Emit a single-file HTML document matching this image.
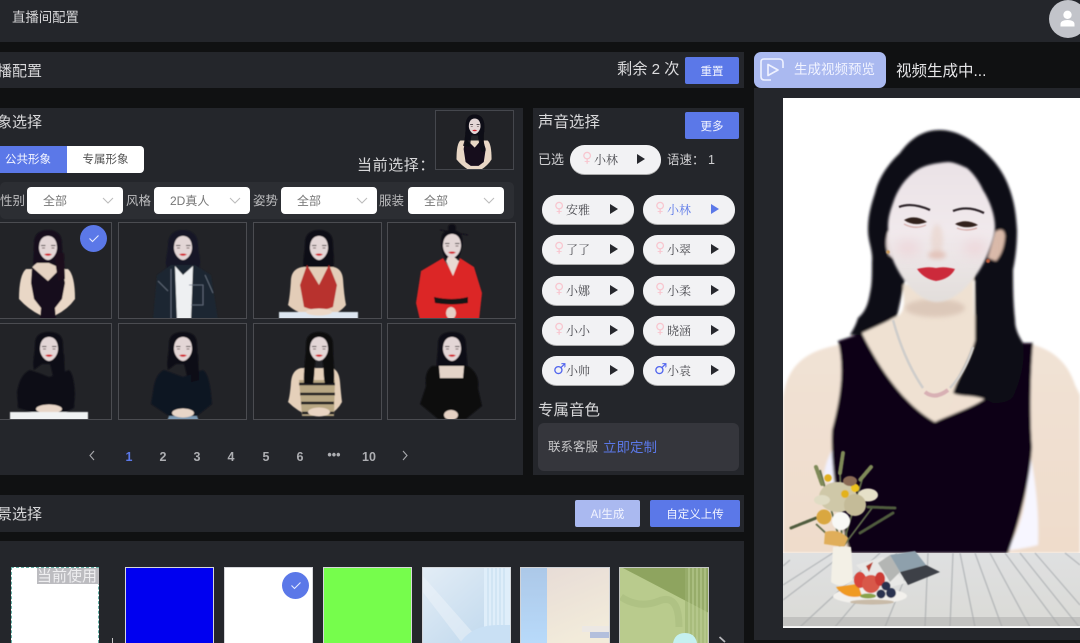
<!DOCTYPE html>
<html lang="zh"><head><meta charset="utf-8"><title>直播间配置</title>
<style>
html,body{margin:0;padding:0;background:#101112;width:1080px;height:643px;overflow:hidden}
#p{position:relative;width:1080px;height:643px;overflow:hidden;background:#101112;font-family:"Liberation Sans","Noto Sans CJK SC",sans-serif;color:#d8d8da;filter:blur(.3px)}
#p div,#p span.a,#p svg.a{position:absolute}
.bar{background:#24262b}
.t{white-space:nowrap;line-height:1}
.btn{background:#5b78e8;color:#f2f4ff;border-radius:2px;font-size:11.5px;display:flex;align-items:center;justify-content:center;height:27px;width:54px;top:0}
.sel{background:#fff;border-radius:4px;width:96px;height:27px;top:187px;color:#777;font-size:12px;line-height:29px;text-indent:16px}
.sel svg{position:absolute;right:9px;top:10px}
.lb{top:195px;font-size:12.5px;color:#bcbcbe;line-height:1;white-space:nowrap}
.cell{width:127px;height:95px;border:1px solid #4b4c51;background:#222327;overflow:hidden}
.cell svg{position:absolute;left:0;top:0}
.pill{width:92px;height:29px;border-radius:15px;background:#f2f2f4;box-shadow:0 1px 0 #aaa}
.pill .g{position:absolute;left:12px;top:5px;font:14px/17px "DejaVu Sans",sans-serif;color:#f8c6cf}
.pill .g.m{color:#5266ee;font-size:15px;left:11px}
.pill .n{position:absolute;left:24px;top:8px;font:12px/14px "Liberation Serif","Noto Serif CJK SC",serif;color:#4b4b50;white-space:nowrap}
.pill i{position:absolute;left:68px;top:9px;width:0;height:0;border-left:8px solid #27282d;border-top:5.5px solid transparent;border-bottom:5.5px solid transparent}
.pg{top:451px;font-size:12.5px;font-weight:bold;color:#adaeb2;line-height:13px;width:24px;text-align:center}
.th{top:567px;width:89px;height:76px;box-sizing:border-box;border:1px solid #d6d6da;border-bottom:0}
</style></head><body>
<div id="p">
<svg width="0" height="0" style="position:absolute"><defs>
<filter id="b" x="-20%" y="-20%" width="140%" height="140%"><feGaussianBlur stdDeviation=".4"/></filter>
<filter id="b2" x="-10%" y="-10%" width="120%" height="120%"><feGaussianBlur stdDeviation="1.200"/></filter>
<filter id="b6" x="-100%" y="-100%" width="300%" height="300%"><feGaussianBlur stdDeviation="6"/></filter>
<filter id="b3" x="-60%" y="-100%" width="220%" height="300%"><feGaussianBlur stdDeviation="2.500"/></filter>
<symbol id="face" viewBox="0 0 129 97" width="129" height="97">
<path d="M64 13C58 13 55 18 55 25C55 31 60 37 64 37C68 37 73 31 73 25C73 18 70 13 64 13Z" fill="#e3d6d6"/>
<path d="M57 22.500h4.500M67 22.500h4.500" stroke="#2a2228" stroke-width="1"/>
<path d="M61 31.500q3 1.800 6 0q-3-1.200-6 0z" fill="#d3202a" stroke="#d3202a" stroke-width=".8"/>
<path d="M58 25h3M67.500 25h3" stroke="#4a3a3a" stroke-width=".8"/>
</symbol>
<symbol id="hl" viewBox="0 0 129 97" width="129" height="97">
<path d="M64 7c-9 0-14 6-14 18 0 12-1 22-4 30l10 2c2-6 2-14 3-18l10 0c1 6 2 18 6 26l6-2c-1-4-3-10-3-20 0-8 1-10 1-18 0-12-6-18-15-18z" fill="#0e0c14"/>
</symbol>
</defs></svg>

<!-- top bar -->
<div class="bar" style="left:0;top:0;width:1080px;height:42px"></div>
<div class="t" style="left:12px;top:11px;font-size:13.4px;color:#d6d6d8">直播间配置</div>
<div style="left:1049px;top:0;width:38px;height:38px;border-radius:50%;background:#c2c4ca"></div>
<svg class="a" style="left:1058px;top:9px" width="20" height="20" viewBox="0 0 20 20"><circle cx="9.500" cy="5.800" r="4.200" fill="#fff"/><path d="M2.500 17.500v-2.500c0-2.600 3-4 7-4s7 1.400 7 4v2.500z" fill="#fff"/></svg>

<!-- header bar -->
<div class="bar" style="left:0;top:52px;width:744px;height:36px"></div>
<div class="t" style="left:-18px;top:64px;font-size:15px">直播配置</div>
<div class="t" style="left:617px;top:62px;font-size:15.200px;color:#dcdcde">剩余 2 次</div>
<div class="btn" style="left:685px;top:57px;">重置</div>

<!-- generate -->
<div style="left:754px;top:52px;width:132px;height:36px;border-radius:7px;background:#aab9f0"></div>
<svg class="a" style="left:759px;top:56px" width="26" height="27" viewBox="0 0 26 27"><path d="M12 24H5.500Q2 24 2 20.500V6Q2 3 5 3H20Q24 3 24 6.500V12" fill="none" stroke="#eef1ff" stroke-width="1.600"/><path d="M9 8.500L19 14L9 19.500Z" fill="none" stroke="#eef1ff" stroke-width="1.700" stroke-linejoin="round"/></svg>
<div class="t" style="left:794px;top:63px;font-size:13.500px;color:#f1f3ff">生成视频预览</div>
<div class="t" style="left:896px;top:64px;font-size:15.500px;color:#e6e6e8">视频生成中...</div>

<!-- avatar panel -->
<div class="bar" style="left:0;top:108px;width:523px;height:367px"></div>
<div class="t" style="left:-18px;top:115px;font-size:15px">形象选择</div>
<div class="t" style="left:357px;top:158px;font-size:15px;letter-spacing:.6px">当前选择：</div>
<div style="left:435px;top:110px;width:77px;height:58px;border:1px solid #45474d;background:#222327;overflow:hidden">
<svg class="a" style="left:-3px;top:-1px" width="84" height="63" viewBox="0 0 129 97"><g filter="url(#b)"><use href="#hl"/><path d="M42 47Q36 52 36 76Q44 86 56 93L72 93Q84 86 90 76Q90 52 84 47Z" fill="#e9d7c6"/><path d="M50 44L64 58L76 44L81 60L78 80L70 86L58 86L50 80L47 60Z" fill="#15091f"/><use href="#hl" opacity=".9"/><use href="#face"/></g></svg>
</div>
<div style="left:0;top:146px;width:67px;height:27px;background:#5b78e8;color:#f3f5ff;font-size:11.500px;line-height:28px;text-indent:5px">公共形象</div>
<div style="left:67px;top:146px;width:77px;height:27px;background:#fff;color:#555;font-size:11.500px;line-height:28px;text-align:center;border-radius:0 4px 4px 0">专属形象</div>

<div style="left:0;top:182px;width:514px;height:37px;background:#2c2e33;border-radius:5px"></div>
<div class="lb" style="left:0">性别</div><div class="sel" style="left:27px">全部<svg width="12" height="7" viewBox="0 0 12 7"><path d="M1 1l5 5 5-5" fill="none" stroke="#bbb"/></svg></div>
<div class="lb" style="left:126px">风格</div><div class="sel" style="left:154px">2D真人<svg width="12" height="7" viewBox="0 0 12 7"><path d="M1 1l5 5 5-5" fill="none" stroke="#bbb"/></svg></div>
<div class="lb" style="left:253px">姿势</div><div class="sel" style="left:281px">全部<svg width="12" height="7" viewBox="0 0 12 7"><path d="M1 1l5 5 5-5" fill="none" stroke="#bbb"/></svg></div>
<div class="lb" style="left:379px">服装</div><div class="sel" style="left:408px">全部<svg width="12" height="7" viewBox="0 0 12 7"><path d="M1 1l5 5 5-5" fill="none" stroke="#bbb"/></svg></div>

<!-- cells row 1 -->
<div class="cell" style="left:-17px;top:222px"><svg width="129" height="97"><g filter="url(#b)">
<path d="M50 20c0-9 6-13 14-13s14 4 14 13c0 12 3 26 1 36l-28-4c-3-6-1-22-1-32z" fill="#120d1c"/>
<path d="M42 46Q35 52 35 76Q44 86 56 92L72 92Q84 86 91 76Q91 52 84 46Z" fill="#e9d7c6"/>
<path d="M53 40L65 40L74 44V50L64 58L48 44Z" fill="#e5d2c2"/>
<path d="M48 44L64 58L78 44L81 60L78 76L71 85L72 97L56 97L57 85L50 76L47 60Z" fill="#17081f"/>
<path d="M70 30L80 30L81 56L74 58Z" fill="#1a0d1f"/><use href="#face"/></g></svg></div>
<div class="cell" style="left:118px;top:222px"><svg width="129" height="97"><g filter="url(#b)">
<path d="M49 22c0-10 6-15 15-15s15 5 15 15c0 8 4 14 1 24H48c-3-8 1-16 1-24z" fill="#141925"/>
<path d="M52 42L76 42L92 52L99 97H34L38 52Z" fill="#1d2530"/>
<path d="M56 43L64 52L74 43L72 97H58Z" fill="#eef0f2"/>
<path d="M70 62h14v20H72M52 46v50M39 58l10 10M86 52l8 18" fill="none" stroke="#6b7686" stroke-width=".8"/>
<use href="#face"/></g></svg></div>
<div class="cell" style="left:253px;top:222px"><svg width="129" height="97"><g filter="url(#b)">
<path d="M51 20c0-9 6-13 14-13s14 4 14 13c0 9 2 17 0 26l-7 4H57l-7-4c-2-8 1-17 1-26z" fill="#0e0c14"/>
<path d="M48 44Q38 46 37 56Q36 74 34 82Q42 90 58 93L74 93Q86 90 92 82Q90 72 89 56Q88 46 80 44Z" fill="#e3cdb8"/>
<path d="M53 42L65 62L75 42L83 62L79 84Q65 90 50 84L46 62Z" fill="#b8302f"/>
<use href="#face" x="1"/><rect x="25" y="89" width="79" height="8" fill="#dde6f0"/>
<ellipse cx="65" cy="89" rx="13" ry="3.500" fill="#ecd9c8"/></g></svg></div>
<div class="cell" style="left:387px;top:222px"><svg width="129" height="97"><g filter="url(#b)">
<circle cx="64" cy="5" r="4" fill="#0e0c14"/><path d="M52 7L80 12" stroke="#0e0c14" stroke-width=".8"/>
<path d="M54 12c2-4 6-5 10-5s9 2 10 7c1 8-1 16-4 22H58c-4-6-6-16-4-24z" fill="#0e0c14"/>
<path d="M55 35L65 50L72 35L86 44L94 70L91 97H32L28 80L33 48Z" fill="#dc2527"/>
<path d="M58 38L65 53L71 38L66 34H60Z" fill="#e9d9d2"/>
<path d="M46 74Q64 78 80 74V80Q64 83 47 80Z" fill="#141318"/>
<ellipse cx="63" cy="90" rx="5" ry="6" fill="#e5cfc4"/><use href="#face" y="-2"/></g></svg></div>
<!-- cells row 2 -->
<div class="cell" style="left:-17px;top:323px"><svg width="129" height="97"><g filter="url(#b)">
<path d="M51 20c0-9 6-12 14-12s14 3 14 12c0 11 3 28 1 38l-9 2c-2-6-3-14-5-20h-8l-8 6c-2-8 1-17 1-26z" fill="#0e0c14"/>
<path d="M46 46L55 49L65 53L75 50L85 46Q90 50 91 70L90 84L82 88L48 88L34 84L33 68Q36 50 46 46Z" fill="#0f1119"/>
<ellipse cx="65" cy="85" rx="13" ry="4.500" fill="#e8d6c8"/><rect x="26" y="88" width="78" height="9" fill="#f0f2f3"/>
<path d="M73 30L80 30L81 56L73 58Z" fill="#0e0c14"/><use href="#face" x="1"/></g></svg></div>
<div class="cell" style="left:118px;top:323px"><svg width="129" height="97"><g filter="url(#b)">
<path d="M50 20c0-9 6-12 14-12s14 3 14 12c0 11 3 28 1 38l-9 2c-2-6-3-14-5-20h-8l-8 6c-2-8 1-17 1-26z" fill="#0e0c14"/>
<path d="M45 46L64 53L84 46Q90 50 92 70L93 80L78 92L50 92L32 80L34 68Q36 50 45 46Z" fill="#0e1220"/>
<path d="M50 92L78 92L80 97H48Z" fill="#7d9ab4"/><ellipse cx="64" cy="89" rx="11" ry="4.500" fill="#e8d6c8"/>
<path d="M72 30L79 30L80 56L72 58Z" fill="#0e0c14"/><use href="#face"/></g></svg></div>
<div class="cell" style="left:253px;top:323px"><svg width="129" height="97"><g filter="url(#b)">
<path d="M47 44Q38 46 37 58Q36 72 34 78Q44 88 56 92L74 92Q84 86 88 78Q87 70 86 58Q85 46 78 44Z" fill="#e5d0ba"/>
<path d="M45 56H81L80 92H48Z" fill="#b9a884"/><path d="M45 60H81M46 70H81M47 79H80M48 89H80" stroke="#17151a" stroke-width="2.600"/>
<path d="M52 20c0-9 6-12 13-12s14 3 14 12c0 14 2 28 1 39l-9 1c-2-8-1-20-3-24h-6c-2 6-1 16-3 24l-9-1c-1-12 2-26 2-39z" fill="#0c0b11"/>
<use href="#face" x="1"/><ellipse cx="65" cy="88" rx="11" ry="4.500" fill="#e9d5c3"/></g></svg></div>
<div class="cell" style="left:387px;top:323px"><svg width="129" height="97"><g filter="url(#b)">
<path d="M50 20c0-9 6-12 14-12s14 3 14 12c0 9 2 17 1 26H49c-1-9 1-17 1-26z" fill="#0e0c14"/>
<path d="M44 42L80 42Q92 50 90 64L94 82L78 95L50 95L32 80L38 62Q36 48 44 42Z" fill="#0a0a10"/>
<path d="M51 42H76L75 54H52Z" fill="#e4d4c8"/><ellipse cx="63" cy="91" rx="7" ry="5" fill="#e6d2c4"/><use href="#face"/></g></svg></div>

<div style="left:80px;top:225px;width:27px;height:27px;border-radius:50%;background:#5b78e8"></div>
<svg class="a" style="left:88px;top:234px" width="12" height="9" viewBox="0 0 12 9"><path d="M1.500 4.500L4.500 7.500L10.500 1.500" fill="none" stroke="#e6ebff" stroke-width="1.100"/></svg>

<!-- pagination -->
<svg class="a" style="left:88px;top:450px" width="8" height="11" viewBox="0 0 8 11"><path d="M6 1L2 5.500L6 10" fill="none" stroke="#a8a9ad" stroke-width="1.100"/></svg>
<div class="pg" style="left:117px;color:#5b78e8">1</div><div class="pg" style="left:151px">2</div><div class="pg" style="left:185px">3</div><div class="pg" style="left:219px">4</div><div class="pg" style="left:254px">5</div><div class="pg" style="left:288px">6</div>
<div class="pg" style="left:322px;top:449px">•••</div><div class="pg" style="left:357px">10</div>
<svg class="a" style="left:401px;top:450px" width="8" height="11" viewBox="0 0 8 11"><path d="M2 1L6 5.500L2 10" fill="none" stroke="#a8a9ad" stroke-width="1.100"/></svg>

<!-- voice panel -->
<div class="bar" style="left:533px;top:108px;width:211px;height:367px"></div>
<div class="t" style="left:538px;top:115px;font-size:15.500px">声音选择</div>
<div class="btn" style="left:685px;top:112px">更多</div>
<div class="t" style="left:538px;top:153px;font-size:13px;color:#cfcfd1">已选</div>
<div class="pill" style="left:570px;top:145px;width:91px"><span class="g">♀</span><span class="n" style="left:24px">小林</span><i style="left:67px"></i></div>
<div class="t" style="left:667px;top:154px;font-size:12.500px;color:#cfcfd1">语速： 1</div>

<div class="pill" style="left:542px;top:195px"><span class="g">♀</span><span class="n">安雅</span><i></i></div>
<div class="pill" style="left:643px;top:195px"><span class="g">♀</span><span class="n" style="color:#5b78e8">小林</span><i style="border-left-color:#5b78e8"></i></div>
<div class="pill" style="left:542px;top:235px"><span class="g">♀</span><span class="n">了了</span><i></i></div>
<div class="pill" style="left:643px;top:235px"><span class="g">♀</span><span class="n">小翠</span><i></i></div>
<div class="pill" style="left:542px;top:276px"><span class="g">♀</span><span class="n">小娜</span><i></i></div>
<div class="pill" style="left:643px;top:276px"><span class="g">♀</span><span class="n">小柔</span><i></i></div>
<div class="pill" style="left:542px;top:316px"><span class="g">♀</span><span class="n">小小</span><i></i></div>
<div class="pill" style="left:643px;top:316px"><span class="g">♀</span><span class="n">晓涵</span><i></i></div>
<div class="pill" style="left:542px;top:356px"><span class="g m">♂</span><span class="n">小帅</span><i></i></div>
<div class="pill" style="left:643px;top:356px"><span class="g m">♂</span><span class="n">小袁</span><i></i></div>

<div class="t" style="left:538px;top:403px;font-size:15.500px">专属音色</div>
<div style="left:538px;top:423px;width:201px;height:48px;background:#35363c;border-radius:6px"></div>
<div class="t" style="left:548px;top:441px;font-size:12.500px;color:#c6c6c8">联系客服</div>
<div class="t" style="left:603px;top:441px;font-size:13.500px;color:#5b78e8">立即定制</div>

<!-- background -->
<div class="bar" style="left:0;top:495px;width:744px;height:37px"></div>
<div class="t" style="left:-18px;top:507px;font-size:15px">背景选择</div>
<div class="btn" style="left:575px;top:500px;width:65px;background:#aab9f0">AI生成</div>
<div class="btn" style="left:650px;top:500px;width:90px">自定义上传</div>
<div class="bar" style="left:0;top:541px;width:744px;height:102px"></div>

<div style="left:11px;top:567px;width:88px;height:76px;box-sizing:border-box;background:#fff;border:1px dashed #64b0a6;border-bottom:0"></div>
<div class="t" style="left:37px;top:568px;width:62px;height:16px;background:#bcbcc0;color:#eeeef0;font-size:15px;line-height:17px">当前使用</div>
<div style="left:112px;top:638px;width:1px;height:5px;background:#c8c8c8"></div>
<div class="th" style="left:125px;background:#0000f0"></div>
<div class="th" style="left:224px;background:#fff"></div>
<div style="left:282px;top:572px;width:27px;height:27px;border-radius:50%;background:#5b78e8"></div>
<svg class="a" style="left:290px;top:581px" width="12" height="9" viewBox="0 0 12 9"><path d="M1.500 4.500L4.500 7.500L10.500 1.500" fill="none" stroke="#e6ebff" stroke-width="1.100"/></svg>
<div class="th" style="left:323px;background:#76fd4c"></div>
<svg class="a" style="left:422px;top:567px" width="89" height="76" viewBox="0 0 89 76"><defs><linearGradient id="g1" x1="0" y1="0" x2="1" y2="1"><stop offset="0" stop-color="#e3edf6"/><stop offset="1" stop-color="#bcd6ec"/></linearGradient></defs><rect width="89" height="76" fill="url(#g1)"/><path d="M0 8L60 76H40L0 24Z" fill="#eef4fa" opacity=".5"/><rect x="62" y="0" width="26" height="60" fill="#dfeefa"/><path d="M66 0V60M70 0V60M74 0V60M78 0V60M82 0V60" stroke="#bcd8ec" stroke-width=".8"/><path d="M38 76Q50 58 76 58H88V76Z" fill="#c9e0f4"/><path d="M.5 76V.5H88.500V76" fill="none" stroke="#d5d8dc"/></svg>
<svg class="a" style="left:520px;top:567px" width="90" height="76" viewBox="0 0 90 76"><defs><linearGradient id="g2" x1="0" y1="0" x2=".5" y2="1"><stop offset="0" stop-color="#e6dad6"/><stop offset="1" stop-color="#f2ebda"/></linearGradient><linearGradient id="g3" x1="0" y1="0" x2="0" y2="1"><stop offset="0" stop-color="#acc8e8"/><stop offset="1" stop-color="#b8dafa"/></linearGradient></defs><rect width="90" height="76" fill="url(#g2)"/><rect width="27" height="76" fill="url(#g3)"/><rect x="62" y="59" width="28" height="6" fill="#ece8e4"/><rect x="70" y="65" width="20" height="6" fill="#b3bfdc"/><path d="M.5 76V.5H89.500V76" fill="none" stroke="#d0d2d6"/></svg>
<svg class="a" style="left:619px;top:567px" width="90" height="76" viewBox="0 0 90 76"><rect width="90" height="76" fill="#b9cb8d"/><path d="M2 0H90V46Z" fill="#8ea45f"/><path d="M2 30Q20 42 40 34T60 60" fill="none" stroke="#a5b97c" stroke-width="7" opacity=".5"/><rect x="66" y="0" width="22" height="76" fill="#9db272" opacity=".6"/><path d="M70 0V76M74 0V76M78 0V76M82 0V76M86 0V76" stroke="#c8d7a2" stroke-width=".8"/><path d="M54 76Q56 66 66 66Q76 66 78 76Z" fill="#c5f0f0"/><path d="M.5 76V.5H89.500V76" fill="none" stroke="#c4c6c4"/></svg>
<svg class="a" style="left:718px;top:636px" width="14" height="7" viewBox="0 0 14 7"><path d="M1.500 1L7 6" stroke="#b8b8bc" stroke-width="1.800"/></svg>

<!-- preview -->
<div class="bar" style="left:754px;top:88px;width:326px;height:552px"></div>
<svg class="a" style="left:783px;top:98px" width="297" height="530" viewBox="783 98 297 530">
<defs>
<clipPath id="cv"><rect x="783" y="98" width="297" height="530"/></clipPath>
<linearGradient id="sk" x1="0" y1="0" x2="0" y2="1"><stop offset="0" stop-color="#f1e3d6"/><stop offset="1" stop-color="#efdccb"/></linearGradient>
<linearGradient id="fc" x1="0" y1="0" x2="0" y2="1"><stop offset="0" stop-color="#eae2e6"/><stop offset=".5" stop-color="#f1e9ec"/><stop offset="1" stop-color="#e2dedb"/></linearGradient>
<linearGradient id="tb" x1="0" y1="0" x2="0" y2="1"><stop offset="0" stop-color="#dfe0e1"/><stop offset="1" stop-color="#dadad6"/></linearGradient>
</defs>
<g clip-path="url(#cv)">
<rect x="783" y="98" width="297" height="530" fill="#fff"/>
<g filter="url(#b2)">
<path d="M783 398C787 368 802 352 838 345L862 333L900 315H975L1023 343C1050 346 1068 362 1075 385L1080 395V553H783Z" fill="url(#sk)"/>
<path d="M1027 462C1030 490 1022 530 1006 551C1020 549 1030 547 1038 545C1039 520 1037 490 1031 458Z" fill="#f7f6ff"/>
<path d="M823 480C825 465 828 458 832 450L834 484Z" fill="#f1f1ff"/>
<path d="M838 341L862 333C880 370 905 405 935 422C955 412 985 405 1000 385L1023 343L1033 343C1030 380 1030 420 1032 447C1030 480 1020 520 1008 553H850C840 520 830 470 832 430C840 400 845 370 838 341Z" fill="#0d0518"/>
<path d="M940 130C920 130 908 142 900 153C886 166 878 180 875 193C870 208 868 218 868 230C868 242 873 250 872 262C872 275 872 285 870 293C868 305 865 312 858 318C856 325 853 330 850 335L862 335L897 316L905 280L975 280L975 340C970 360 957 378 953 393C962 398 975 393 993 403C1002 403 1008 402 1013 397C1018 385 1026 365 1023 343C1018 335 1015 328 1015 320C1013 300 1013 285 1013 270C1016 255 1017 243 1017 230C1016 212 1014 202 1010 190C1004 172 994 160 983 150C970 138 955 130 940 130Z" fill="#100b19"/>
<path d="M903 285L904 303Q904 312 897 317L862 333C880 370 905 405 935 422C950 414 955 400 953 393C957 378 970 360 975 340L973 270Z" fill="#efe1d2"/>
<path d="M995 232Q1004 226 1005 236Q1004 252 996 261L988 258Z" fill="#d9b9a9"/>
<path d="M888 232Q884 245 889 255L894 258L892 232Z" fill="#e6dada"/>
</g>
<ellipse cx="935" cy="308" rx="30" ry="9" fill="#d8c2b4" opacity=".8" filter="url(#b3)"/>
<g filter="url(#b2)">
<path d="M948 162C935 163 925 165 917 170C905 178 897 190 893 203C889 214 888 220 888 227C888 240 890 250 893 260C898 272 905 283 913 290C921 298 930 302 937 302C946 302 955 297 963 290C975 279 983 266 988 253C992 243 995 235 995 227C995 215 990 201 983 190C979 181 973 173 967 168C960 165 954 162 948 162Z" fill="url(#fc)"/>
</g>
<ellipse cx="908" cy="248" rx="12" ry="8" fill="#eecdd2" opacity=".6" filter="url(#b6)"/>
<ellipse cx="975" cy="248" rx="12" ry="8" fill="#eecdd2" opacity=".6" filter="url(#b6)"/>
<ellipse cx="937" cy="240" rx="6" ry="16" fill="#e8d2c8" opacity=".6" filter="url(#b3)"/>
<ellipse cx="937" cy="255" rx="9" ry="4" fill="#e2c0b6" filter="url(#b3)" opacity=".9"/>
<g filter="url(#b)">
<path d="M899 207Q912 202 930 210" fill="none" stroke="#2a2028" stroke-width="2.200"/>
<path d="M953 211Q968 205 984 213" fill="none" stroke="#2a2028" stroke-width="2.200"/>
<path d="M904 220Q915 214 927 222Q914 227 904 220Z" fill="#33221f"/>
<path d="M955 224Q966 218 978 225Q966 230 955 224Z" fill="#33221f"/>
<path d="M904 224Q915 230 926 225M957 228Q966 232 977 228" fill="none" stroke="#d4a8a4" stroke-width="1.200"/>
<path d="M917 269Q928 266 936 268Q944 266 955 269Q950 279 936 281Q924 279 917 269Z" fill="#cc2a3a"/>
<path d="M893 320Q904 360 923 388M973 347Q965 372 950 388" fill="none" stroke="#cfcdcb" stroke-width="2.500"/>
<path d="M925 392Q935 400 948 390" fill="none" stroke="#d8b0b4" stroke-width="4"/>
<circle cx="888" cy="252" r="1.800" fill="#c8985a"/><circle cx="988" cy="261" r="2" fill="#b85a3a"/>
</g>
<rect x="783" y="553" width="297" height="74" fill="url(#tb)"/>
<g stroke="#868c92" stroke-width="1.300" opacity=".45" filter="url(#b)">
<path d="M790 560L783 566M845 553L783 600M880 553L800 627M915 553L885 627M953 553L950 627M975 553L1002 627M1005 553L1060 627M1035 553L1080 605M1065 553L1080 565M833 553L783 585M897 553L835 627M928 553L925 627M960 553L975 627M990 553L1030 627M1020 553L1080 628"/>
</g>
<rect x="783" y="617" width="297" height="10" fill="#a9a9a9" opacity=".5"/>
<rect x="783" y="626" width="297" height="1.500" fill="#f2f2f2"/>
<g filter="url(#b)">
<path d="M842 548L840 470M842 548L816 524M842 548L872 508M842 548L862 480M842 548L820 470" stroke="#5e6b4a" stroke-width="1.800" fill="none"/>
<g stroke="#7f8a58" stroke-width="4" stroke-linecap="round" stroke-dasharray="3 1.500" fill="none"><path d="M843 453L840 473M871 467L860 480M816 467L822 484"/></g>
<g stroke="#4f5c3c" stroke-width="3" stroke-linecap="round" stroke-dasharray="3 1" fill="none"><path d="M791 528L816 518M860 533L893 513M868 507L895 508"/></g>
<ellipse cx="838" cy="497" rx="19" ry="15" fill="#cfc8a8"/>
<ellipse cx="822" cy="500" rx="8" ry="5" fill="#e0dcc4"/>
<ellipse cx="868" cy="495" rx="10" ry="6.500" fill="#e6e0c8"/>
<ellipse cx="855" cy="505" rx="11" ry="11" fill="#c4bb98"/>
<circle cx="828" cy="478" r="3.800" fill="#e1b022"/><circle cx="855" cy="488" r="4.200" fill="#eec21c"/><circle cx="845" cy="494" r="4" fill="#e3b21e"/>
<ellipse cx="850" cy="481" rx="7" ry="5" fill="#8a6a54"/>
<circle cx="824" cy="517" r="7.500" fill="#d9a740"/>
<circle cx="841" cy="521" r="9" fill="#f8f8f5"/>
<path d="M825 532Q838 528 848 538L844 547L824 544Z" fill="#e0ae5a"/>
<path d="M833 547Q842 546 851 547L853 580Q842 590 831 582Z" fill="#f3f0e6"/>
<path d="M856 565L883 557L906 583L880 590Z" fill="#e8e8e6"/>
<path d="M866 566L873 562L869 572Z" fill="#b84030"/>
<path d="M878 563L890 555L900 572L890 582Z" fill="#b4b6b4"/>
<path d="M890 555L915 551L926 565L900 572Z" fill="#8ea0ac"/>
<path d="M900 572L926 565L940 572L908 585Z" fill="#3d4146"/>
<ellipse cx="870" cy="596" rx="37" ry="8" fill="#f2f0ec"/>
<ellipse cx="872" cy="602" rx="22" ry="2.500" fill="#b8a48c" opacity=".7"/>
<path d="M836 587L858 584L862 596Q845 600 836 587Z" fill="#f09a20"/>
<ellipse cx="860" cy="580" rx="6" ry="8" fill="#d8443a"/>
<ellipse cx="871" cy="584" rx="9" ry="9" fill="#d8584a"/>
<ellipse cx="880" cy="579" rx="5" ry="7" fill="#cc3a36"/>
<circle cx="886" cy="586" r="4.500" fill="#2c3350"/><circle cx="881" cy="594" r="4.500" fill="#2c3350"/><circle cx="891" cy="593" r="5" fill="#2c3350"/>
<ellipse cx="868" cy="596" rx="8" ry="2.500" fill="#8aa34a"/>
</g>
</g>
</svg>
</div>
</body></html>
